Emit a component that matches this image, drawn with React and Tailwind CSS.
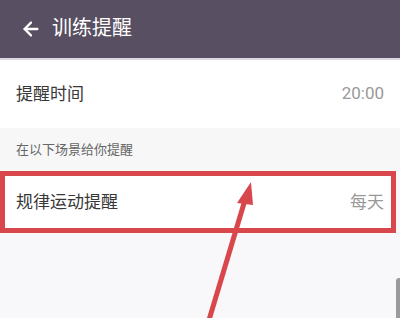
import { ArrowLeft } from "lucide-react"

export default function App() {
    return (
        <div className="relative w-[400px] h-[318px] overflow-hidden bg-[#f8f8fa]" style={{ fontFamily: '"Noto Sans", "Noto Sans CJK SC", sans-serif' }}>
            {/* Header */}
            <div className="h-[60px] bg-[#584f62] flex items-center pl-[20px] gap-[10px] border-b-2 border-[#dcd8e0]">
                <ArrowLeft size={22} strokeWidth={2.5} className="text-white" />
                <span className="text-white text-[20px] leading-none -mt-[2px]">训练提醒</span>
            </div>

            {/* Reminder time */}
            <div className="h-[68px] bg-white flex items-center justify-between px-[16px]">
                <span className="text-[17px] text-[#383838]">提醒时间</span>
                <span className="text-[17px] text-[#999]" style={{ fontFamily: 'Roboto, sans-serif' }}>20:00</span>
            </div>

            {/* Section label */}
            <div className="h-[43px] flex items-center px-[16px] bg-[#f7f7f8]">
                <span className="text-[13px] text-[#666]">在以下场景给你提醒</span>
            </div>

            {/* Highlighted row */}
            <div className="h-[62px] bg-white flex items-center justify-between pl-[16px] pr-[7px] border-[5px] border-[#d8474c] mr-[4px]">
                <span className="text-[17px] text-[#383838] -ml-[5px]">规律运动提醒</span>
                <span className="text-[17px] text-[#999]">每天</span>
            </div>

            {/* Scrollbar hint */}
            <div className="absolute right-0 top-[278px] w-[4px] h-[40px] bg-[#9a9a9a] rounded-tl-[3px]" />

            {/* Red arrow */}
            <svg className="absolute inset-0" width="400" height="318" viewBox="0 0 400 318">
                <line x1="209" y1="320" x2="245" y2="200" stroke="#d8474c" strokeWidth="5" />
                <polygon points="251,182 237,203 253,205" fill="#d8474c" />
            </svg>
        </div>
    )
}
